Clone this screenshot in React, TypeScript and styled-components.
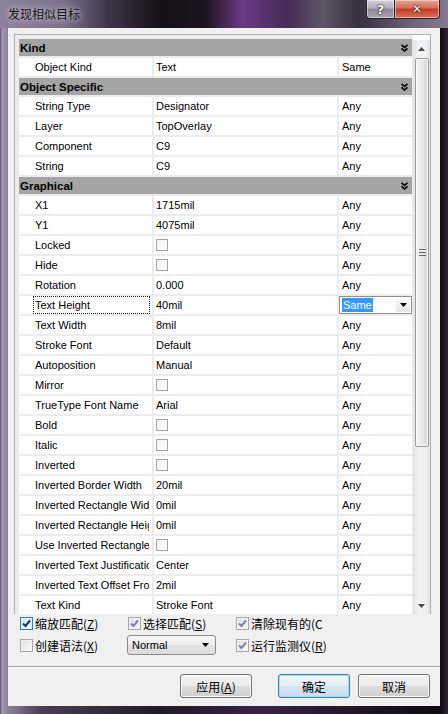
import React from "react";
import styled, { createGlobalStyle, css } from "styled-components";

const UI_FONT = `"Liberation Sans", "Noto Sans CJK SC", sans-serif`;
const CJK_FONT = `"Noto Sans CJK SC", "Liberation Sans", sans-serif`;

type GridRow = { name: string; value: string | null; match: string; focused?: boolean };
type Section = { title: string; rows: GridRow[] };

const any = (name: string, value: string | null): GridRow => ({ name, value, match: "Any" });

const sections: Section[] = [
    { title: "Kind", rows: [{ name: "Object Kind", value: "Text", match: "Same" }] },
    {
        title: "Object Specific",
        rows: [any("String Type", "Designator"), any("Layer", "TopOverlay"), any("Component", "C9"), any("String", "C9")],
    },
    {
        title: "Graphical",
        rows: [
            any("X1", "1715mil"),
            any("Y1", "4075mil"),
            any("Locked", null),
            any("Hide", null),
            any("Rotation", "0.000"),
            { name: "Text Height", value: "40mil", match: "Same", focused: true },
            any("Text Width", "8mil"),
            any("Stroke Font", "Default"),
            any("Autoposition", "Manual"),
            any("Mirror", null),
            any("TrueType Font Name", "Arial"),
            any("Bold", null),
            any("Italic", null),
            any("Inverted", null),
            any("Inverted Border Width", "20mil"),
            any("Inverted Rectangle Width", "0mil"),
            any("Inverted Rectangle Height", "0mil"),
            any("Use Inverted Rectangle", null),
            any("Inverted Text Justification", "Center"),
            any("Inverted Text Offset From Edge", "2mil"),
            any("Text Kind", "Stroke Font"),
        ],
    },
];

const CollapseIcon = () => (
    <svg width="7" height="8" viewBox="0 0 7 8">
        <path d="M0.5 0.8 L3.5 3.4 L6.5 0.8" stroke="#000" strokeWidth="1.6" fill="none" />
        <path d="M0.5 4.4 L3.5 7 L6.5 4.4" stroke="#000" strokeWidth="1.6" fill="none" />
    </svg>
);

const Triangle = ({ up, color = "#000" }: { up?: boolean; color?: string }) => (
    <svg width="7" height="4" viewBox="0 0 7 4">
        <path d={up ? "M0 4 L3.5 0 L7 4 Z" : "M0 0 L7 0 L3.5 4 Z"} fill={color} />
    </svg>
);

const CheckMark = ({ color }: { color: string }) => (
    <svg width="9" height="9" viewBox="0 0 9 9">
        <path d="M1 4.5 L3.5 7 L8 1.5" stroke={color} strokeWidth="2" fill="none" />
    </svg>
);

const Option: React.FC<{ label: string; hotkey?: string; checked?: boolean; active?: boolean }> = ({
    label,
    hotkey,
    checked,
    active,
}) => (
    <OptionLabel>
        <Check $active={active}>{checked && <CheckMark color={active ? "#1f2f6a" : "#7d7fb0"} />}</Check>
        <span>
            {label}
            {hotkey !== undefined && (
                <>
                    (<Key>{hotkey}</Key>)
                </>
            )}
        </span>
    </OptionLabel>
);

const App: React.FC = () => {
    return (
        <Window>
            <GlobalStyle />
            <TitleBar>
                <Title>发现相似目标</Title>
                <CaptionButtons>
                    <CaptionButton $variant="help">?</CaptionButton>
                    <CaptionButton $variant="close">✕</CaptionButton>
                </CaptionButtons>
            </TitleBar>
            <Client>
                <Panel>
                    <Grid>
                        {sections.map(section => (
                            <React.Fragment key={section.title}>
                                <HeaderRow>
                                    <span>{section.title}</span>
                                    <CollapseIcon />
                                </HeaderRow>
                                {section.rows.map(row => (
                                    <DataRow key={row.name}>
                                        <NameCell>
                                            <NameLabel $focused={row.focused}>{row.name}</NameLabel>
                                        </NameCell>
                                        <ValueCell>{row.value === null ? <GridCheck /> : row.value}</ValueCell>
                                        {row.focused ? (
                                            <ComboCell>
                                                <Selected>{row.match}</Selected>
                                                <ComboArrow>
                                                    <Triangle />
                                                </ComboArrow>
                                            </ComboCell>
                                        ) : (
                                            <MatchCell>{row.match}</MatchCell>
                                        )}
                                    </DataRow>
                                ))}
                            </React.Fragment>
                        ))}
                    </Grid>
                    <Scrollbar>
                        <ScrollButton>
                            <Triangle up color="#4a4a4a" />
                        </ScrollButton>
                        <Track>
                            <Thumb>
                                <Grip />
                            </Thumb>
                        </Track>
                        <ScrollButton>
                            <Triangle color="#4a4a4a" />
                        </ScrollButton>
                    </Scrollbar>
                </Panel>
                <Options>
                    <Option label="缩放匹配" hotkey="Z" checked active />
                    <Option label="选择匹配" hotkey="S" checked />
                    <Option label="清除现有的(C" checked />
                    <Option label="创建语法" hotkey="X" />
                    <SelectBox>
                        <span>Normal</span>
                        <Triangle />
                    </SelectBox>
                    <Option label="运行监测仪" hotkey="R" checked />
                </Options>
                <Divider />
                <ButtonRow>
                    <DialogButton $spaced>
                        应用(<Key>A</Key>)
                    </DialogButton>
                    <DialogButton $primary>确定</DialogButton>
                    <DialogButton>取消</DialogButton>
                </ButtonRow>
            </Client>
        </Window>
    );
};

const GlobalStyle = createGlobalStyle`
    html, body {
        margin: 0;
        padding: 0;
        background: #141018;
    }
    body {
        width: 448px;
        height: 714px;
        overflow: hidden;
    }
`;

const Window = styled.div`
    width: 448px;
    height: 714px;
    display: flex;
    flex-direction: column;
    box-sizing: border-box;
    background: linear-gradient(
        90deg,
        #5a5066 0px,
        #a598b3 2px,
        #8c8099 8px,
        #4a3f55 40px,
        #201a26 160px,
        #3a2248 260px,
        #1a141e 380px,
        #0e0b12 440px,
        #2c2234 448px
    );
    font-family: ${UI_FONT};
`;

const TitleBar = styled.div`
    height: 28px;
    flex-shrink: 0;
    display: flex;
    justify-content: space-between;
    align-items: flex-start;
    padding-left: 8px;
    background: linear-gradient(
        90deg,
        #8f839b 0%,
        #7d718a 14%,
        #40364a 24%,
        #141016 36%,
        #1c1420 46%,
        #6c3a84 54%,
        #472a58 64%,
        #5e5666 72%,
        #37303e 80%,
        #6d6478 92%,
        #857b90 100%
    );
`;

const Title = styled.div`
    line-height: 28px;
    font-family: ${CJK_FONT};
    font-size: 12px;
    color: #111;
    text-shadow: 0 0 4px #c8c0d0, 0 0 8px #c8c0d0;
`;

const CaptionButtons = styled.div`
    display: flex;
    margin-right: 8px;
`;

const CaptionButton = styled.div<{ $variant: "help" | "close" }>`
    height: 19px;
    box-sizing: border-box;
    display: flex;
    align-items: center;
    justify-content: center;
    border: 1px solid #2a2230;
    border-top: none;
    color: #fff;
    font-family: "DejaVu Sans", sans-serif;
    font-weight: bold;
    text-shadow: 0 0 2px #000, 0 0 1px #000;
    box-shadow: inset 0 0 0 1px rgba(255, 255, 255, 0.45);
    ${p =>
        p.$variant === "help"
            ? css`
                  width: 28px;
                  font-size: 13px;
                  border-radius: 0 0 0 4px;
                  border-right: none;
                  background: linear-gradient(#d6d3dc, #b3aebb 45%, #8e8797 50%, #a9a3b2);
              `
            : css`
                  width: 46px;
                  font-size: 12px;
                  border-radius: 0 0 4px 0;
                  background: linear-gradient(#e8a494, #d46b58 45%, #c23c25 50%, #d9705a);
              `}
`;

const Client = styled.div`
    flex: 1;
    margin: 0 8px 8px 8px;
    background: #f0f0f0;
    display: flex;
    flex-direction: column;
`;

const Panel = styled.div`
    height: 580px;
    margin: 6px 9px 0 6px;
    box-sizing: border-box;
    border: 1px solid #aab0b8;
    border-bottom: none;
    background: #fff;
    display: flex;
    overflow: hidden;
`;

const Grid = styled.div`
    flex: 1;
    display: flex;
    flex-direction: column;
    gap: 2px;
    padding: 4px 1px 0 4px;
    background: #ececec;
    overflow: hidden;
    font-size: 11px;
    color: #000;
`;

const HeaderRow = styled.div`
    height: 17px;
    flex-shrink: 0;
    display: flex;
    align-items: center;
    justify-content: space-between;
    padding: 0 4px 0 1px;
    background: #a4a4a4;
    font-weight: bold;
    font-size: 11.5px;
`;

const DataRow = styled.div`
    height: 18px;
    flex-shrink: 0;
    display: grid;
    grid-template-columns: 133px 183px 73px;
    column-gap: 2px;
`;

const NameCell = styled.div`
    background: #fff;
    overflow: hidden;
`;

const NameLabel = styled.div<{ $focused?: boolean }>`
    height: 18px;
    box-sizing: border-box;
    margin: 0 2px 0 14px;
    padding: 0 1px;
    line-height: 16px;
    white-space: nowrap;
    overflow: hidden;
    border: 1px dotted ${p => (p.$focused ? "#222" : "transparent")};
`;

const ValueCell = styled.div`
    background: #fff;
    padding-left: 2px;
    line-height: 18px;
    white-space: nowrap;
    overflow: hidden;
`;

const MatchCell = styled(ValueCell)`
    padding-left: 3px;
`;

const GridCheck = styled.div`
    width: 12px;
    height: 12px;
    margin-top: 3px;
    box-sizing: border-box;
    border: 1px solid #a4a4a4;
    background: linear-gradient(135deg, #f2f2f2, #fff);
`;

const ComboCell = styled.div`
    display: flex;
    align-items: center;
    box-sizing: border-box;
    border: 1px solid #8e8f8f;
    background: #fff;
    padding-left: 2px;
`;

const Selected = styled.span`
    background: #3399ff;
    color: #fff;
    line-height: 14px;
    padding: 0 1px;
`;

const ComboArrow = styled.div`
    margin-left: auto;
    width: 14px;
    height: 14px;
    margin-right: 1px;
    display: flex;
    align-items: center;
    justify-content: center;
    background: linear-gradient(#fafafa, #e6e6e6);
`;

const Scrollbar = styled.div`
    width: 17px;
    flex-shrink: 0;
    margin-top: 5px;
    display: flex;
    flex-direction: column;
    background: linear-gradient(90deg, #e3e3e3, #f2f2f2 30%, #f2f2f2 70%, #e3e3e3);
`;

const ScrollButton = styled.div`
    height: 17px;
    flex-shrink: 0;
    display: flex;
    align-items: center;
    justify-content: center;
`;

const Track = styled.div`
    flex: 1;
    display: flex;
    flex-direction: column;
    padding-top: 1px;
`;

const Thumb = styled.div`
    height: 389px;
    margin: 0 1px 0 2px;
    box-sizing: border-box;
    border: 1px solid #9b9b9b;
    border-radius: 2px;
    background: linear-gradient(90deg, #f4f4f4, #e8e8e8 50%, #d6d6d6);
    box-shadow: inset 0 0 0 1px #fbfbfb;
    display: flex;
    align-items: center;
    justify-content: center;
`;

const Grip = styled.div`
    width: 7px;
    height: 5px;
    border-top: 1px solid #6a6a6a;
    border-bottom: 1px solid #6a6a6a;
    background: linear-gradient(#fff 0 1px, transparent 1px 2px, #6a6a6a 2px 3px, transparent 3px);
`;

const Options = styled.div`
    margin-top: 2px;
    padding-left: 12px;
    display: grid;
    grid-template-columns: 108px 108px 110px;
    grid-template-rows: 14px 20px;
    row-gap: 5px;
    align-items: center;
`;

const OptionLabel = styled.label`
    display: flex;
    align-items: center;
    gap: 2px;
    font-family: ${CJK_FONT};
    font-size: 12px;
    color: #000;
    white-space: nowrap;
    overflow: hidden;
`;

const Check = styled.span<{ $active?: boolean }>`
    width: 13px;
    height: 13px;
    flex-shrink: 0;
    box-sizing: border-box;
    display: flex;
    align-items: center;
    justify-content: center;
    border: 1px solid ${p => (p.$active ? "#3c7fb1" : "#a7a7a7")};
    background: ${p =>
        p.$active ? "linear-gradient(135deg, #cfe8f8, #f4fbff)" : "linear-gradient(135deg, #dedede, #fafafa)"};
    box-shadow: inset 0 0 0 1px ${p => (p.$active ? "#e2f2fd" : "#f4f4f4")};
`;

const Key = styled.span`
    text-decoration: underline;
`;

const SelectBox = styled.div`
    width: 89px;
    height: 20px;
    box-sizing: border-box;
    margin-left: -1px;
    display: flex;
    align-items: center;
    justify-content: space-between;
    padding: 0 6px 0 4px;
    border: 1px solid #8a8a8a;
    border-radius: 3px;
    background: linear-gradient(#f7f7f7, #ededed 50%, #e3e3e3 51%, #dcdcdc);
    font-family: ${UI_FONT};
    font-size: 11px;
    color: #000;
`;

const Divider = styled.div`
    margin-top: 11px;
    border-top: 1px solid #a0a0a0;
    border-bottom: 1px solid #fff;
`;

const ButtonRow = styled.div`
    display: flex;
    justify-content: flex-end;
    gap: 8px;
    margin: 6px 10px 0 0;
`;

const DialogButton = styled.div<{ $primary?: boolean; $spaced?: boolean }>`
    width: 72px;
    height: 24px;
    box-sizing: border-box;
    display: flex;
    align-items: center;
    justify-content: center;
    border-radius: 3px;
    font-family: ${CJK_FONT};
    font-size: 12px;
    color: #000;
    margin-right: ${p => (p.$spaced ? "18px" : "0")};
    border: 1px solid ${p => (p.$primary ? "#3c7fb1" : "#707070")};
    background: ${p =>
        p.$primary
            ? "linear-gradient(#f1f7fb, #e3eef6 50%, #d6e6f1 51%, #cadded)"
            : "linear-gradient(#f2f2f2, #ebebeb 50%, #dddddd 51%, #cfcfcf)"};
    box-shadow: inset 0 0 0 1px ${p => (p.$primary ? "#a6dbf6" : "#fbfbfb")};
`;

export default App;
